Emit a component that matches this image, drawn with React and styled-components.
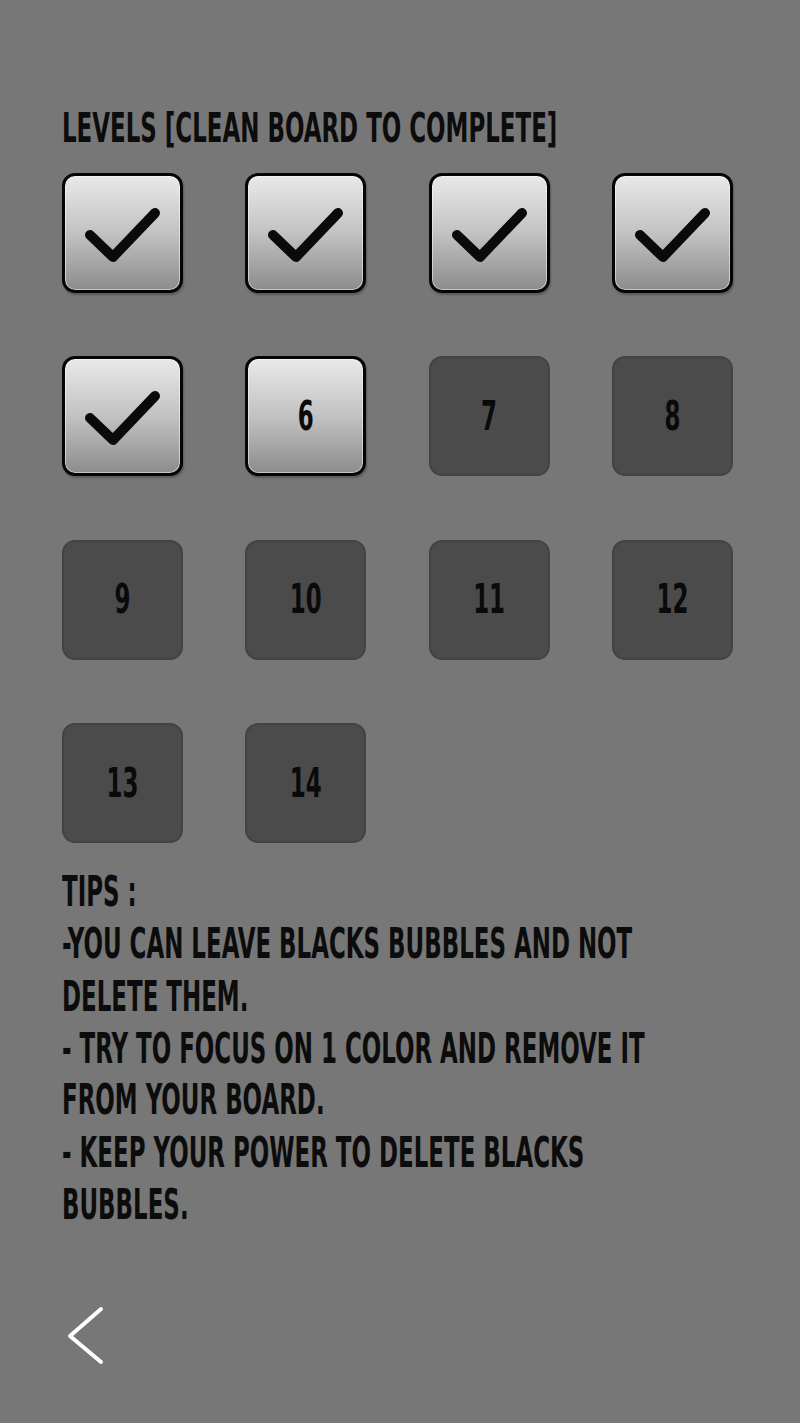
import React from "react";
import styled, { createGlobalStyle, css } from "styled-components";

const GlobalStyle = createGlobalStyle`
  html, body {
    margin: 0;
    padding: 0;
    background: #777777;
  }
  * {
    box-sizing: border-box;
  }
`;

// the game font is a tall condensed face; we stretch DejaVu Sans Condensed vertically
const stretched = (k) => css`
  transform: scaleY(${k});
  transform-origin: left top;
`;

const Page = styled.div`
  min-height: 1423px;
  padding: 107px 0 0 62px;
  font-family: "DejaVu Sans Condensed", "Liberation Sans", sans-serif;
  font-weight: 700;
  color: #0c0c0c;
`;

const Title = styled.h1`
  margin: 0 0 39.75px;
  font-size: 25.5px;
  line-height: 26.25px;
  font-weight: 700;
  white-space: nowrap;
  ${stretched(1.6)}
`;

const LevelGrid = styled.div`
  display: grid;
  grid-template-columns: repeat(4, 121px);
  grid-auto-rows: 120px;
  column-gap: 62.3px;
  row-gap: 63.3px;
`;

const lightTile = css`
  border: 3px solid #050505;
  background: linear-gradient(180deg, #e9e9e9 0%, #c2c2c2 50%, #8c8c8c 100%);
  box-shadow: inset 0 0 0 1px rgba(255, 255, 255, 0.5), 1px 2px 2px rgba(0, 0, 0, 0.25);
`;

const lockedTile = css`
  border: 2px solid #434343;
  background: #4b4b4b;
`;

const LevelTile = styled.div`
  display: flex;
  align-items: center;
  justify-content: center;
  border-radius: 13px;
  ${(p) => (p.$locked ? lockedTile : lightTile)}
`;

const LevelNumber = styled.span`
  display: block;
  font-size: 25.5px;
  line-height: 18.5px;
  height: 18.5px;
  color: #0a0a0a;
  transform: scaleY(1.62);
  transform-origin: center center;
`;

const Check = styled.svg`
  width: 75px;
  height: 54px;
  margin-top: 4px;
`;

const Tips = styled.div`
  margin-top: 22.4px;
  width: 640px;
  font-size: 25.5px;
  line-height: 30.86px;
  ${stretched(1.695)}

  p {
    margin: 0;
  }
`;

const BackButton = styled.button`
  display: block;
  margin: 224px 0 0 4px;
  padding: 0;
  border: none;
  background: none;
  cursor: pointer;
`;

const levels = [
  { n: 1, done: true },
  { n: 2, done: true },
  { n: 3, done: true },
  { n: 4, done: true },
  { n: 5, done: true },
  { n: 6, open: true },
  { n: 7 },
  { n: 8 },
  { n: 9 },
  { n: 10 },
  { n: 11 },
  { n: 12 },
  { n: 13 },
  { n: 14 },
];

function CheckMark() {
  return (
    <Check viewBox="0 0 75 54">
      <polyline
        points="5,27 28,49 70,5"
        fill="none"
        stroke="#0a0a0a"
        strokeWidth="10"
        strokeLinecap="round"
        strokeLinejoin="round"
      />
    </Check>
  );
}

export default function App() {
  return (
    <Page>
      <GlobalStyle />
      <Title>LEVELS [CLEAN BOARD TO COMPLETE]</Title>
      <LevelGrid>
        {levels.map((l) => (
          <LevelTile key={l.n} $locked={!l.done && !l.open}>
            {l.done ? <CheckMark /> : <LevelNumber>{l.n}</LevelNumber>}
          </LevelTile>
        ))}
      </LevelGrid>
      <Tips>
        <p>TIPS :</p>
        <p>-YOU CAN LEAVE BLACKS BUBBLES AND NOT DELETE THEM.</p>
        <p>- TRY TO FOCUS ON 1 COLOR AND REMOVE IT FROM YOUR BOARD.</p>
        <p>- KEEP YOUR POWER TO DELETE BLACKS BUBBLES.</p>
      </Tips>
      <BackButton aria-label="back">
        <svg width="40" height="62" viewBox="0 0 40 62">
          <polyline
            points="35,4 4,31 35,57"
            fill="none"
            stroke="#ffffff"
            strokeWidth="4"
            strokeLinecap="round"
            strokeLinejoin="round"
          />
        </svg>
      </BackButton>
    </Page>
  );
}
